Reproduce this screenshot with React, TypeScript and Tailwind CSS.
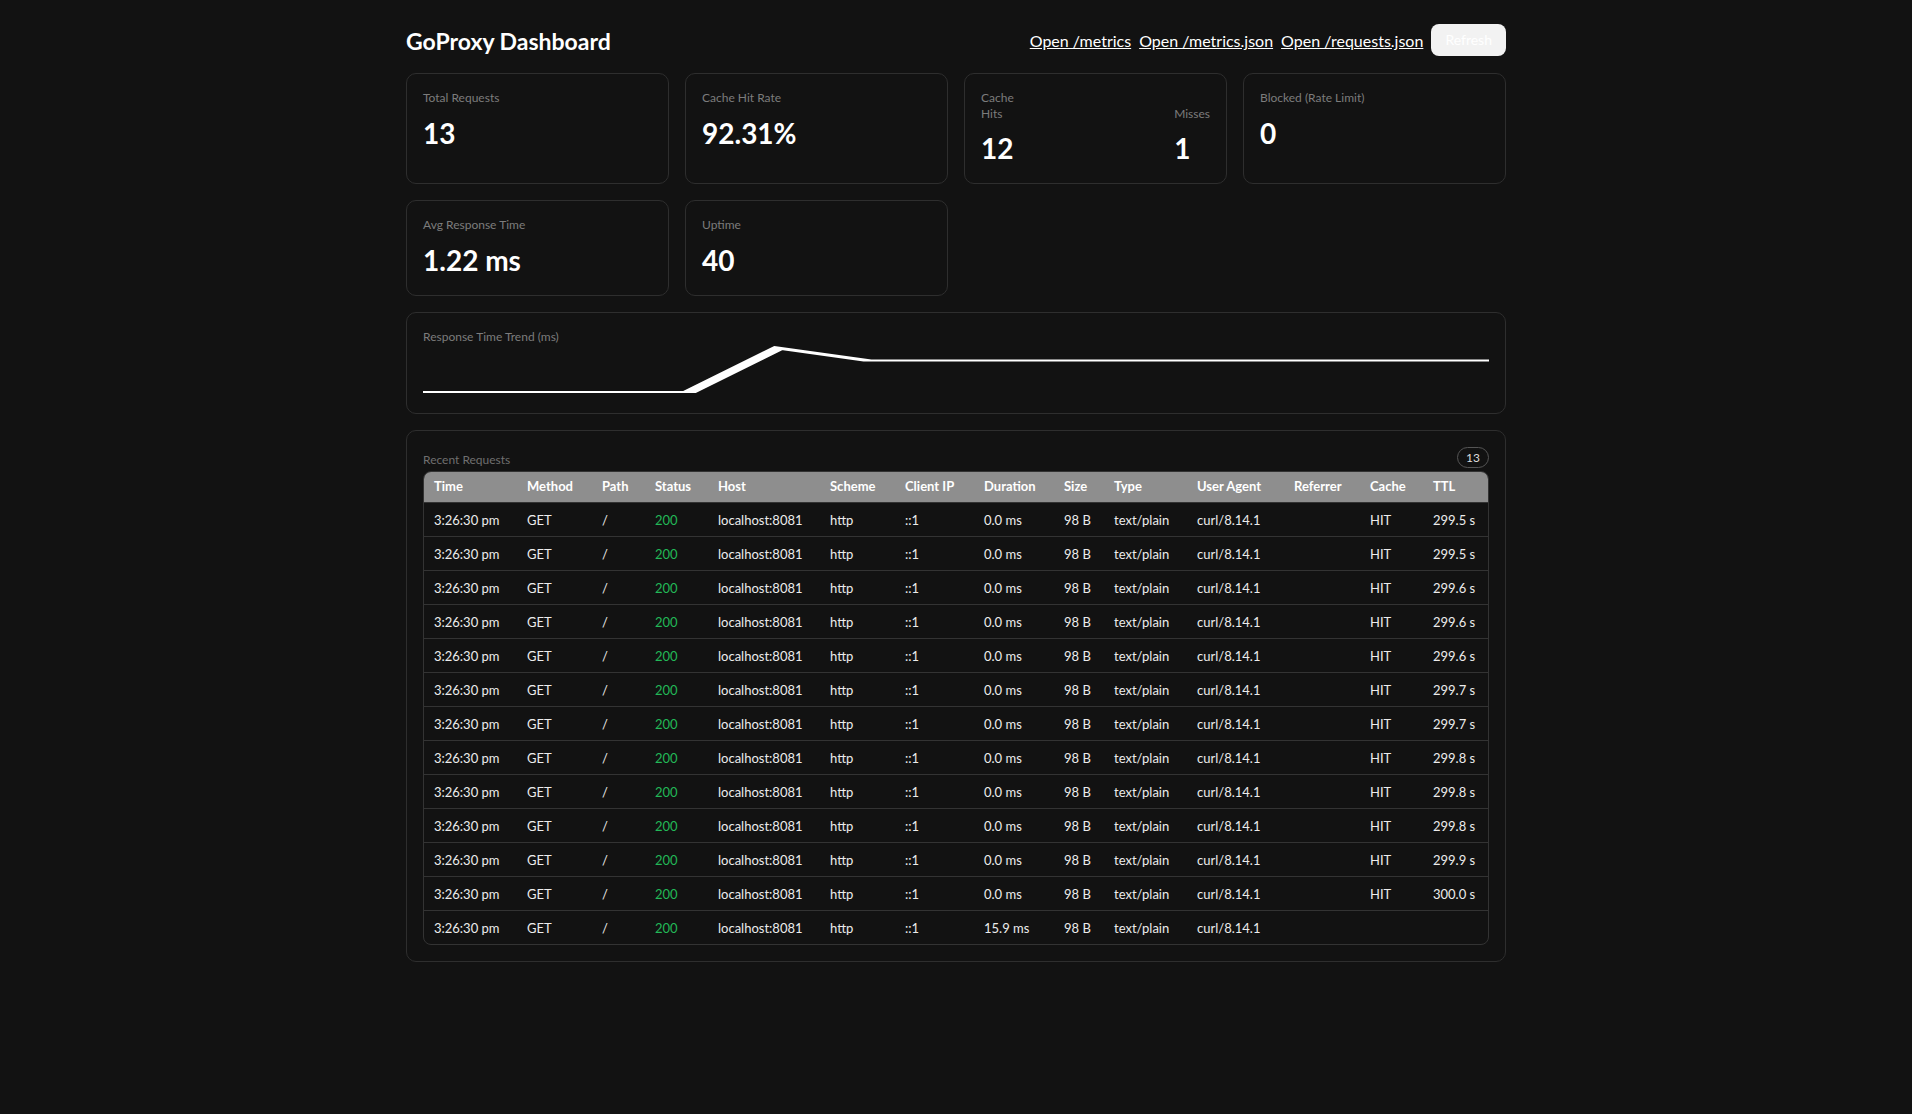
import React from "react";

const FONT = { fontFamily: '"Segoe UI", Lato, "Noto Sans", sans-serif' };

const TTLS = [
  "299.5 s",
  "299.5 s",
  "299.6 s",
  "299.6 s",
  "299.6 s",
  "299.7 s",
  "299.7 s",
  "299.8 s",
  "299.8 s",
  "299.8 s",
  "299.9 s",
  "300.0 s",
  "",
];

const rows = TTLS.map((ttl, i) => ({
  time: "3:26:30 pm",
  method: "GET",
  path: "/",
  status: "200",
  host: "localhost:8081",
  scheme: "http",
  ip: "::1",
  duration: i === 12 ? "15.9 ms" : "0.0 ms",
  size: "98 B",
  type: "text/plain",
  ua: "curl/8.14.1",
  referrer: "",
  cache: ttl ? "HIT" : "",
  ttl,
}));

const headers = [
  "Time",
  "Method",
  "Path",
  "Status",
  "Host",
  "Scheme",
  "Client IP",
  "Duration",
  "Size",
  "Type",
  "User Agent",
  "Referrer",
  "Cache",
  "TTL",
];

// trend points, viewBox 132x52, stretched to the card width
const trend = [47, 47, 47, 47, 3, 15.5, 15.5, 15.5, 15.5, 15.5, 15.5, 15.5, 15.5];

function Card({ children, className = "" }: { children: React.ReactNode; className?: string }) {
  return (
    <div className={`rounded-[10px] border border-[#2e2e2e] bg-[#121212] p-4 ${className}`}>
      {children}
    </div>
  );
}

function Stat({ label, value }: { label: string; value: string }) {
  return (
    <Card>
      <div className="text-xs leading-4 text-[#7c7c7c]">{label}</div>
      <div className="mt-2 text-[28px] font-bold leading-[38px] text-white">{value}</div>
    </Card>
  );
}

export default function App() {
  return (
    <div className="min-h-screen bg-[#121212] text-white" style={FONT}>
      <div className="mx-auto w-[1100px] pb-10 pt-6">
        {/* header */}
        <div className="mb-[17px] flex h-8 items-center justify-between">
          <h1 className="pt-[2px] text-[23px] font-bold">GoProxy Dashboard</h1>
          <div className="flex items-center gap-2 text-base">
            <a href="#" className="pt-[2px] underline">Open /metrics</a>
            <a href="#" className="pt-[2px] underline">Open /metrics.json</a>
            <a href="#" className="pt-[2px] underline">Open /requests.json</a>
            <button className="h-8 rounded-lg bg-[#f2f2f2] px-[14px] text-sm text-white">Refresh</button>
          </div>
        </div>

        <div className="grid grid-cols-4 gap-4">
          <Stat label="Total Requests" value="13" />
          <Stat label="Cache Hit Rate" value="92.31%" />
          <Card>
            <div className="text-xs leading-4 text-[#7c7c7c]">Cache</div>
            <div className="flex justify-between">
              <div>
                <div className="text-xs leading-4 text-[#7c7c7c]">Hits</div>
                <div className="mt-2 text-[28px] font-bold leading-[37px]">12</div>
              </div>
              <div>
                <div className="text-xs leading-4 text-[#7c7c7c]">Misses</div>
                <div className="mt-2 text-[28px] font-bold leading-[37px]">1</div>
              </div>
            </div>
          </Card>
          <Stat label="Blocked (Rate Limit)" value="0" />
          <Stat label="Avg Response Time" value="1.22 ms" />
          <Stat label="Uptime" value="40" />
        </div>

        {/* trend */}
        <Card className="mt-4">
          <div className="text-xs leading-4 text-[#7c7c7c]">Response Time Trend (ms)</div>
          <svg viewBox="0 0 132 52" preserveAspectRatio="none" className="block h-[52px] w-full">
            <polyline
              fill="none"
              stroke="#fff"
              strokeWidth={2}
              points={trend.map((y, i) => `${i * 11},${y}`).join(" ")}
            />
          </svg>
        </Card>

        {/* recent requests */}
        <Card className="mt-4">
          <div className="mb-[3px] flex items-end justify-between">
            <div className="text-xs leading-4 text-[#6f6f6f]">Recent Requests</div>
            <span className="rounded-full border border-[#555] px-2 text-xs leading-[19px] text-[#ddd]">13</span>
          </div>
          <div className="overflow-hidden rounded-lg border border-[#333]">
            <table className="w-full table-fixed border-collapse text-left text-[13px]">
              <colgroup>
                <col className="w-[93px]" />
                <col className="w-[75px]" />
                <col className="w-[53px]" />
                <col className="w-[63px]" />
                <col className="w-[112px]" />
                <col className="w-[75px]" />
                <col className="w-[79px]" />
                <col className="w-[80px]" />
                <col className="w-[50px]" />
                <col className="w-[83px]" />
                <col className="w-[97px]" />
                <col className="w-[76px]" />
                <col className="w-[63px]" />
                <col className="w-[66px]" />
              </colgroup>
              <thead>
                <tr className="h-[30px] bg-[#8e8e8e]">
                  {headers.map((h) => (
                    <th key={h} className="px-[10px] font-bold text-white">
                      {h}
                    </th>
                  ))}
                </tr>
              </thead>
              <tbody>
                {rows.map((r, i) => (
                  <tr key={i} className="h-[34px] border-t border-[#333] text-[#ececec] [&>td]:px-[10px] [&>td]:pt-[3px]">
                    <td>{r.time}</td>
                    <td>{r.method}</td>
                    <td>{r.path}</td>
                    <td className="text-[#22b857]">{r.status}</td>
                    <td>{r.host}</td>
                    <td>{r.scheme}</td>
                    <td>{r.ip}</td>
                    <td>{r.duration}</td>
                    <td>{r.size}</td>
                    <td>{r.type}</td>
                    <td>{r.ua}</td>
                    <td>{r.referrer}</td>
                    <td>{r.cache}</td>
                    <td>{r.ttl}</td>
                  </tr>
                ))}
              </tbody>
            </table>
          </div>
        </Card>
      </div>
    </div>
  );
}
